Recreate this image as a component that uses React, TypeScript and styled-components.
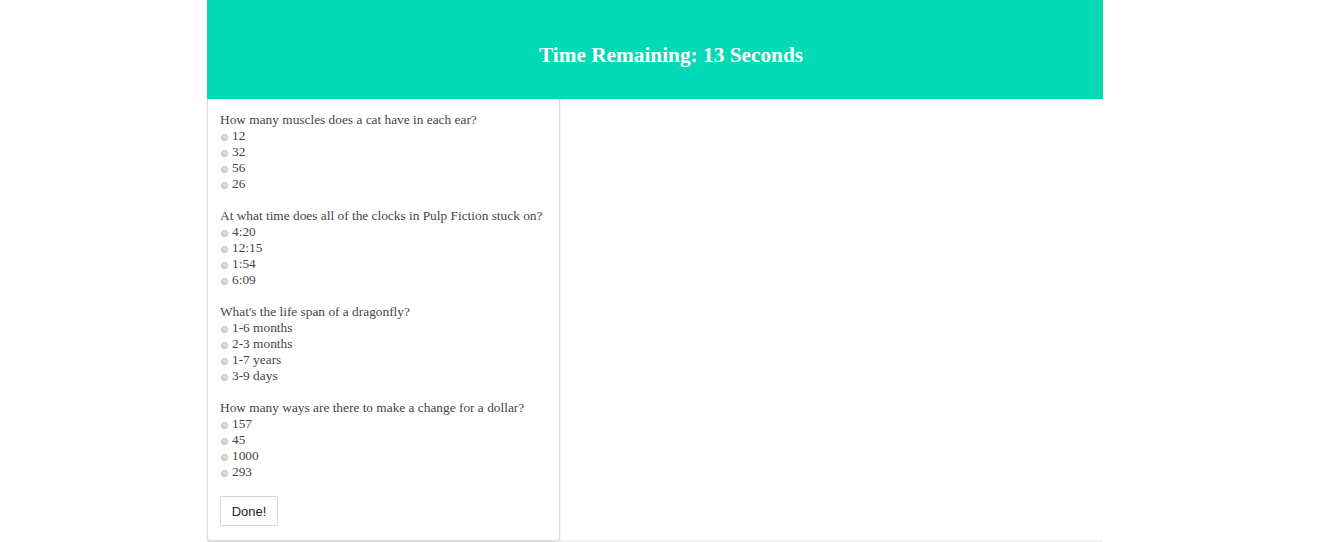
import React from "react";
import styled, { createGlobalStyle } from "styled-components";

const GlobalStyle = createGlobalStyle`
  html, body {
    margin: 0;
    padding: 0;
    background: #ffffff;
  }
`;

interface Question {
  text: string;
  answers: string[];
}

const questions: Question[] = [
  { text: "How many muscles does a cat have in each ear?", answers: ["12", "32", "56", "26"] },
  {
    text: "At what time does all of the clocks in Pulp Fiction stuck on?",
    answers: ["4:20", "12:15", "1:54", "6:09"],
  },
  { text: "What's the life span of a dragonfly?", answers: ["1-6 months", "2-3 months", "1-7 years", "3-9 days"] },
  { text: "How many ways are there to make a change for a dollar?", answers: ["157", "45", "1000", "293"] },
];

const Page = styled.div`
  width: 896px;
  margin-left: 207px;
  font-family: "Liberation Serif", "Times New Roman", serif;
`;

const Header = styled.header`
  height: 99px;
  background: #02dab6;
  display: flex;
  align-items: center;
  justify-content: center;
  padding-left: 32px;
  box-sizing: border-box;
`;

const Title = styled.h2`
  margin: 11px 0 0;
  color: #ffffff;
  font-size: 21.3px;
  font-weight: 700;
`;

const Main = styled.main`
  display: flex;
  align-items: flex-start;
  border-bottom: 2px solid #f3f3f3;
  height: 441px;
`;

const Card = styled.form`
  width: 353px;
  height: 442px;
  box-sizing: border-box;
  background: #ffffff;
  border: 1px solid #dedede;
  border-top: none;
  border-radius: 0 0 4px 4px;
  box-shadow: 0 1px 2px rgba(0, 0, 0, 0.12);
  padding: 13px 12px 14px;
  display: flex;
  flex-direction: column;
  gap: 16px;
  color: #444444;
  font-size: 13.35px;
  line-height: 16px;
`;

const Block = styled.div`
  display: flex;
  flex-direction: column;
`;

const Option = styled.label`
  display: flex;
  align-items: center;
`;

const Radio = styled.input`
  appearance: none;
  width: 7px;
  height: 7px;
  margin: 2px 4px 0 1px;
  border: 1px solid #b8b8b8;
  border-radius: 50%;
  background: linear-gradient(#e6e6e6, #cfcfcf);
  box-sizing: border-box;
`;

const DoneButton = styled.button`
  align-self: flex-start;
  width: 58px;
  height: 30px;
  background: #ffffff;
  border: 1px solid #d6d6d6;
  border-radius: 2px;
  font-family: "Liberation Sans", Arial, sans-serif;
  font-size: 13px;
  color: #222222;
  padding: 0;
`;

export default function App() {
  return (
    <>
      <GlobalStyle />
      <Page>
        <Header>
          <Title>Time Remaining: 13 Seconds</Title>
        </Header>
        <Main>
          <Card>
            {questions.map((q, qi) => (
              <Block key={qi}>
                <div>{q.text}</div>
                {q.answers.map((a) => (
                  <Option key={a}>
                    <Radio type="radio" name={`q${qi}`} value={a} />
                    {a}
                  </Option>
                ))}
              </Block>
            ))}
            <DoneButton type="button">Done!</DoneButton>
          </Card>
        </Main>
      </Page>
    </>
  );
}
